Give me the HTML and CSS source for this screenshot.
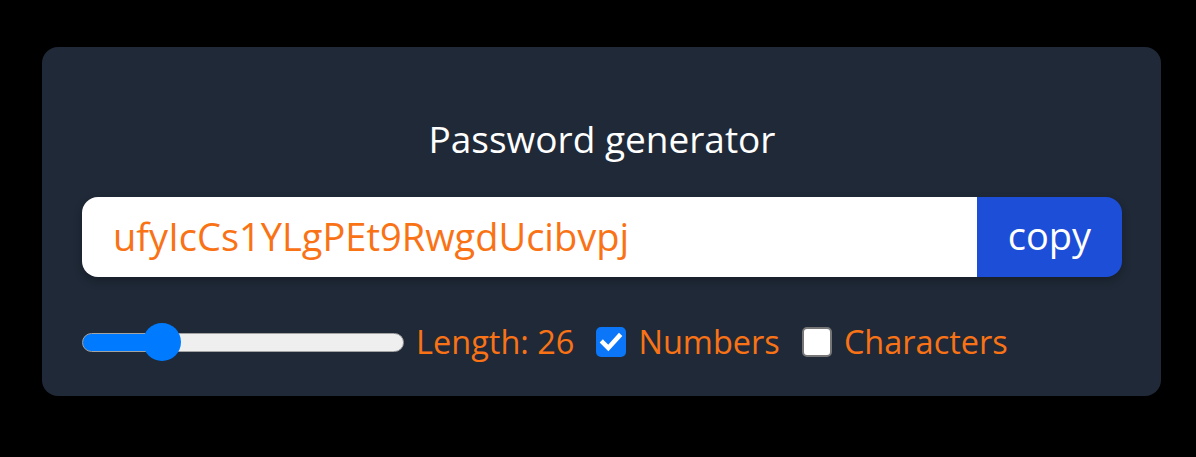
FILE: index.html
```html
<!DOCTYPE html>
<html lang="en">
<head>
<meta charset="utf-8">
<title>Password generator</title>
<link rel="stylesheet" href="styles.css">
</head>
<body>
<div class="card">
  <h1 class="title">Password generator</h1>
  <div class="field">
    <input class="pw" type="text" value="ufyIcCs1YLgPEt9RwgdUcibvpj" readonly>
    <button class="copy">copy</button>
  </div>
  <div class="options">
    <input class="range" type="range" min="6" max="100" value="26">
    <label class="lbl">Length: 26</label>
    <label class="opt">
      <span class="box checked">
        <svg viewBox="0 0 24 24" width="26" height="26"><path d="M4.5 12.5l5 5L19.5 6.5" fill="none" stroke="#fff" stroke-width="4.2" stroke-linecap="square"/></svg>
      </span>
      <span class="lbl">Numbers</span>
    </label>
    <label class="opt">
      <span class="box"></span>
      <span class="lbl">Characters</span>
    </label>
  </div>
</div>
</body>
</html>
```
FILE: styles.css
```css
html, body {
  margin: 0;
  background: #000;
}
body {
  font-family: "Open Sans", "Noto Sans", sans-serif;
  padding-top: 47px;
  padding-left: 42px;
}
.card {
  box-sizing: border-box;
  width: 1119px;
  height: 349px;
  background: #1f2937;
  border-radius: 16px;
  padding: 72px 39px 0 40px;
}
.title {
  margin: 0;
  font-weight: 400;
  font-size: 37px;
  line-height: 40px;
  color: #fff;
  text-align: center;
}
.field {
  display: flex;
  margin-top: 38px;
  height: 80px;
  border-radius: 16px;
  box-shadow: 0 4px 8px rgba(0,0,0,0.25);
}
.pw {
  flex: 1;
  min-width: 0;
  border: none;
  outline: none;
  margin: 0;
  background: #fff;
  border-radius: 16px 0 0 16px;
  padding: 0 0 2px 31px;
  font-family: "Open Sans", "Noto Sans", sans-serif;
  font-size: 38px;
  color: #f97316;
}
.copy {
  width: 145px;
  border: none;
  margin: 0;
  background: #1d4ed8;
  color: #fff;
  border-radius: 0 16px 16px 0;
  font-family: "Open Sans", "Noto Sans", sans-serif;
  font-size: 38px;
  padding: 0 0 4px;
}
.options {
  display: flex;
  align-items: center;
  margin-top: 45px;
  height: 40px;
  color: #f97316;
  font-size: 32.5px;
}
.range {
  -webkit-appearance: none;
  appearance: none;
  margin: 0 12px 0 0;
  width: 322px;
  height: 38px;
  background: transparent;
}
.range::-webkit-slider-runnable-track {
  height: 19px;
  box-sizing: border-box;
  border-radius: 10px;
  border: 1.5px solid #a3a3a3;
  background: linear-gradient(to right, #007bff 0, #007bff 80px, #efefef 80px);
}
.range::-webkit-slider-thumb {
  -webkit-appearance: none;
  width: 38px;
  height: 38px;
  border-radius: 50%;
  background: #007bff;
  margin-top: -11px;
  border: none;
}
.lbl {
  line-height: 40px;
  white-space: nowrap;
}
.opt {
  display: flex;
  align-items: center;
  margin-left: 22px;
}
.box {
  box-sizing: border-box;
  width: 30px;
  height: 30px;
  border-radius: 5px;
  background: #fff;
  border: 2.5px solid #767676;
  margin-right: 12px;
  display: flex;
  align-items: center;
  justify-content: center;
}
.box.checked {
  background: #0b76f7;
  border: none;
}
```
